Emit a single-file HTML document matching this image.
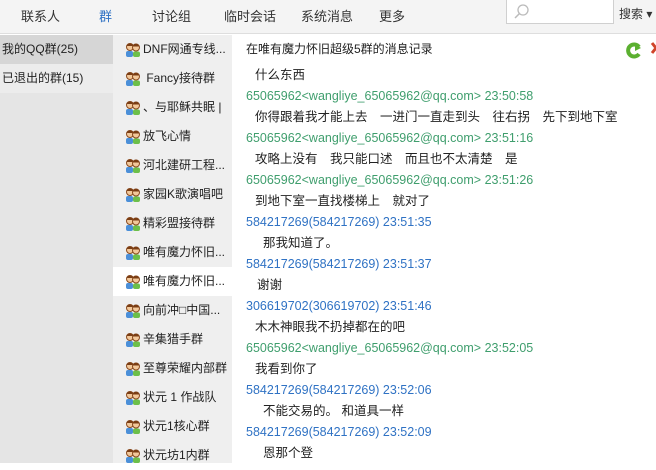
<!DOCTYPE html>
<html><head><meta charset="utf-8"><style>
*{margin:0;padding:0;box-sizing:border-box}
body{width:656px;height:463px;overflow:hidden;background:#fff;font-family:"Liberation Sans","Microsoft YaHei","Noto Sans CJK SC",sans-serif;font-size:12px;color:#222;position:relative}
#top{position:absolute;left:0;top:0;width:656px;height:34px;background:#f4f4f4;border-bottom:1px solid #dedede}
#top span{position:absolute;top:6px;font-size:13px;color:#333}
#search{position:absolute;left:506px;top:-1px;width:108px;height:25px;background:#fff;border:1px solid #d0d0d0}
#left{position:absolute;left:0;top:35px;width:113px;height:428px;background:#e5e5e5}
#left div{height:29px;line-height:29px;padding-left:2px;font-size:12px}
#mid{position:absolute;left:113px;top:35px;width:119px;height:428px;background:#efefef}
.r{height:29px;line-height:29px;padding-left:12px;white-space:nowrap;overflow:hidden;font-size:12px;display:flex;align-items:center}
.r svg{margin-right:2px;flex:none}
.sel{background:#fff}
#right{position:absolute;left:232px;top:35px;width:424px}
.l{height:21px;line-height:21px;white-space:nowrap;font-size:12.5px}
.t{padding-left:25px}
.g{color:#3f9e6d}.b{color:#2f72c4}
</style></head><body>
<div id="top">
<span style="left:21px">联系人</span><span style="left:99px;color:#2f72c4">群</span><span style="left:152px">讨论组</span><span style="left:224px">临时会话</span><span style="left:301px">系统消息</span><span style="left:379px">更多</span>
<div id="search"><svg width="20" height="20" style="position:absolute;left:4px;top:2px"><circle cx="12" cy="8" r="5" fill="none" stroke="#bbb" stroke-width="1.3"/><line x1="8.5" y1="11.5" x2="4" y2="16" stroke="#bbb" stroke-width="1.5"/></svg></div>
<span style="left:619px;top:5px;font-size:12px">搜索 ▾</span>
</div>
<div id="left"><div style="background:#d6d6d6">我的QQ群(25)</div><div style="background:#ececec">已退出的群(15)</div></div>
<svg width="0" height="0" style="position:absolute"><defs><g id="ic"><circle cx="5" cy="5" r="3.5" fill="#f2c89a" stroke="#8a4a1e"/><path d="M1.5 4 Q5 -1 8.5 4" fill="#7a3d14"/><circle cx="11" cy="5.5" r="3.5" fill="#f2c89a" stroke="#8a4a1e"/><path d="M7.5 4.5 Q11 -1 14.5 4.5" fill="#7a3d14"/><rect x="1" y="9" width="7" height="6" rx="2" fill="#4b8fd8"/><rect x="8" y="9.5" width="7" height="5.5" rx="2" fill="#6cbf4a"/></g></defs></svg>
<div id="mid">
<div class="r"><svg width="16" height="16"><use href="#ic"/></svg>DNF网通专线...</div>
<div class="r"><svg width="16" height="16"><use href="#ic"/></svg>&nbsp;Fancy接待群</div>
<div class="r"><svg width="16" height="16"><use href="#ic"/></svg>、与耶稣共眠 |</div>
<div class="r"><svg width="16" height="16"><use href="#ic"/></svg>放飞心情</div>
<div class="r"><svg width="16" height="16"><use href="#ic"/></svg>河北建研工程...</div>
<div class="r"><svg width="16" height="16"><use href="#ic"/></svg>家园K歌演唱吧</div>
<div class="r"><svg width="16" height="16"><use href="#ic"/></svg>精彩盟接待群</div>
<div class="r"><svg width="16" height="16"><use href="#ic"/></svg>唯有魔力怀旧...</div>
<div class="r sel"><svg width="16" height="16"><use href="#ic"/></svg>唯有魔力怀旧...</div>
<div class="r"><svg width="16" height="16"><use href="#ic"/></svg>向前冲□中国...</div>
<div class="r"><svg width="16" height="16"><use href="#ic"/></svg>辛集猎手群</div>
<div class="r"><svg width="16" height="16"><use href="#ic"/></svg>至尊荣耀内部群</div>
<div class="r"><svg width="16" height="16"><use href="#ic"/></svg>状元 1 作战队</div>
<div class="r"><svg width="16" height="16"><use href="#ic"/></svg>状元1核心群</div>
<div class="r"><svg width="16" height="16"><use href="#ic"/></svg>状元坊1内群</div>
</div>
<div id="right">
<div style="height:29px;line-height:29px;padding-left:14px;font-size:12px">在唯有魔力怀旧超级5群的消息记录</div>
<svg width="20" height="20" style="position:absolute;left:392px;top:6px"><path d="M15 6 A6 6 0 1 0 15 13" fill="none" stroke="#5bb030" stroke-width="4"/><path d="M11 3 L17 7 L11 10Z" fill="#5bb030"/></svg>
<svg width="10" height="20" style="position:absolute;left:418px;top:6px"><path d="M2 2 L10 12 M10 2 L2 12" stroke="#d0442a" stroke-width="3"/></svg>
<div style="position:absolute;top:30px;left:0">
<div class="l t" style="padding-left:23px">什么东西</div>
<div class="l g" style="padding-left:14px">65065962&lt;wangliye_65065962@qq.com&gt; 23:50:58</div>
<div class="l" style="padding-left:23px">你得跟着我才能上去　一进门一直走到头　往右拐　先下到地下室</div>
<div class="l g" style="padding-left:14px">65065962&lt;wangliye_65065962@qq.com&gt; 23:51:16</div>
<div class="l" style="padding-left:23px">攻略上没有　我只能口述　而且也不太清楚　是</div>
<div class="l g" style="padding-left:14px">65065962&lt;wangliye_65065962@qq.com&gt; 23:51:26</div>
<div class="l" style="padding-left:23px">到地下室一直找楼梯上　就对了</div>
<div class="l b" style="padding-left:14px">584217269(584217269) 23:51:35</div>
<div class="l" style="padding-left:31px">那我知道了。</div>
<div class="l b" style="padding-left:14px">584217269(584217269) 23:51:37</div>
<div class="l" style="padding-left:25px">谢谢</div>
<div class="l b" style="padding-left:14px">306619702(306619702) 23:51:46</div>
<div class="l" style="padding-left:23px">木木神眼我不扔掉都在的吧</div>
<div class="l g" style="padding-left:14px">65065962&lt;wangliye_65065962@qq.com&gt; 23:52:05</div>
<div class="l" style="padding-left:23px">我看到你了</div>
<div class="l b" style="padding-left:14px">584217269(584217269) 23:52:06</div>
<div class="l" style="padding-left:31px">不能交易的。 和道具一样</div>
<div class="l b" style="padding-left:14px">584217269(584217269) 23:52:09</div>
<div class="l" style="padding-left:31px">恩那个登</div>
</div>
</div>
</body></html>
